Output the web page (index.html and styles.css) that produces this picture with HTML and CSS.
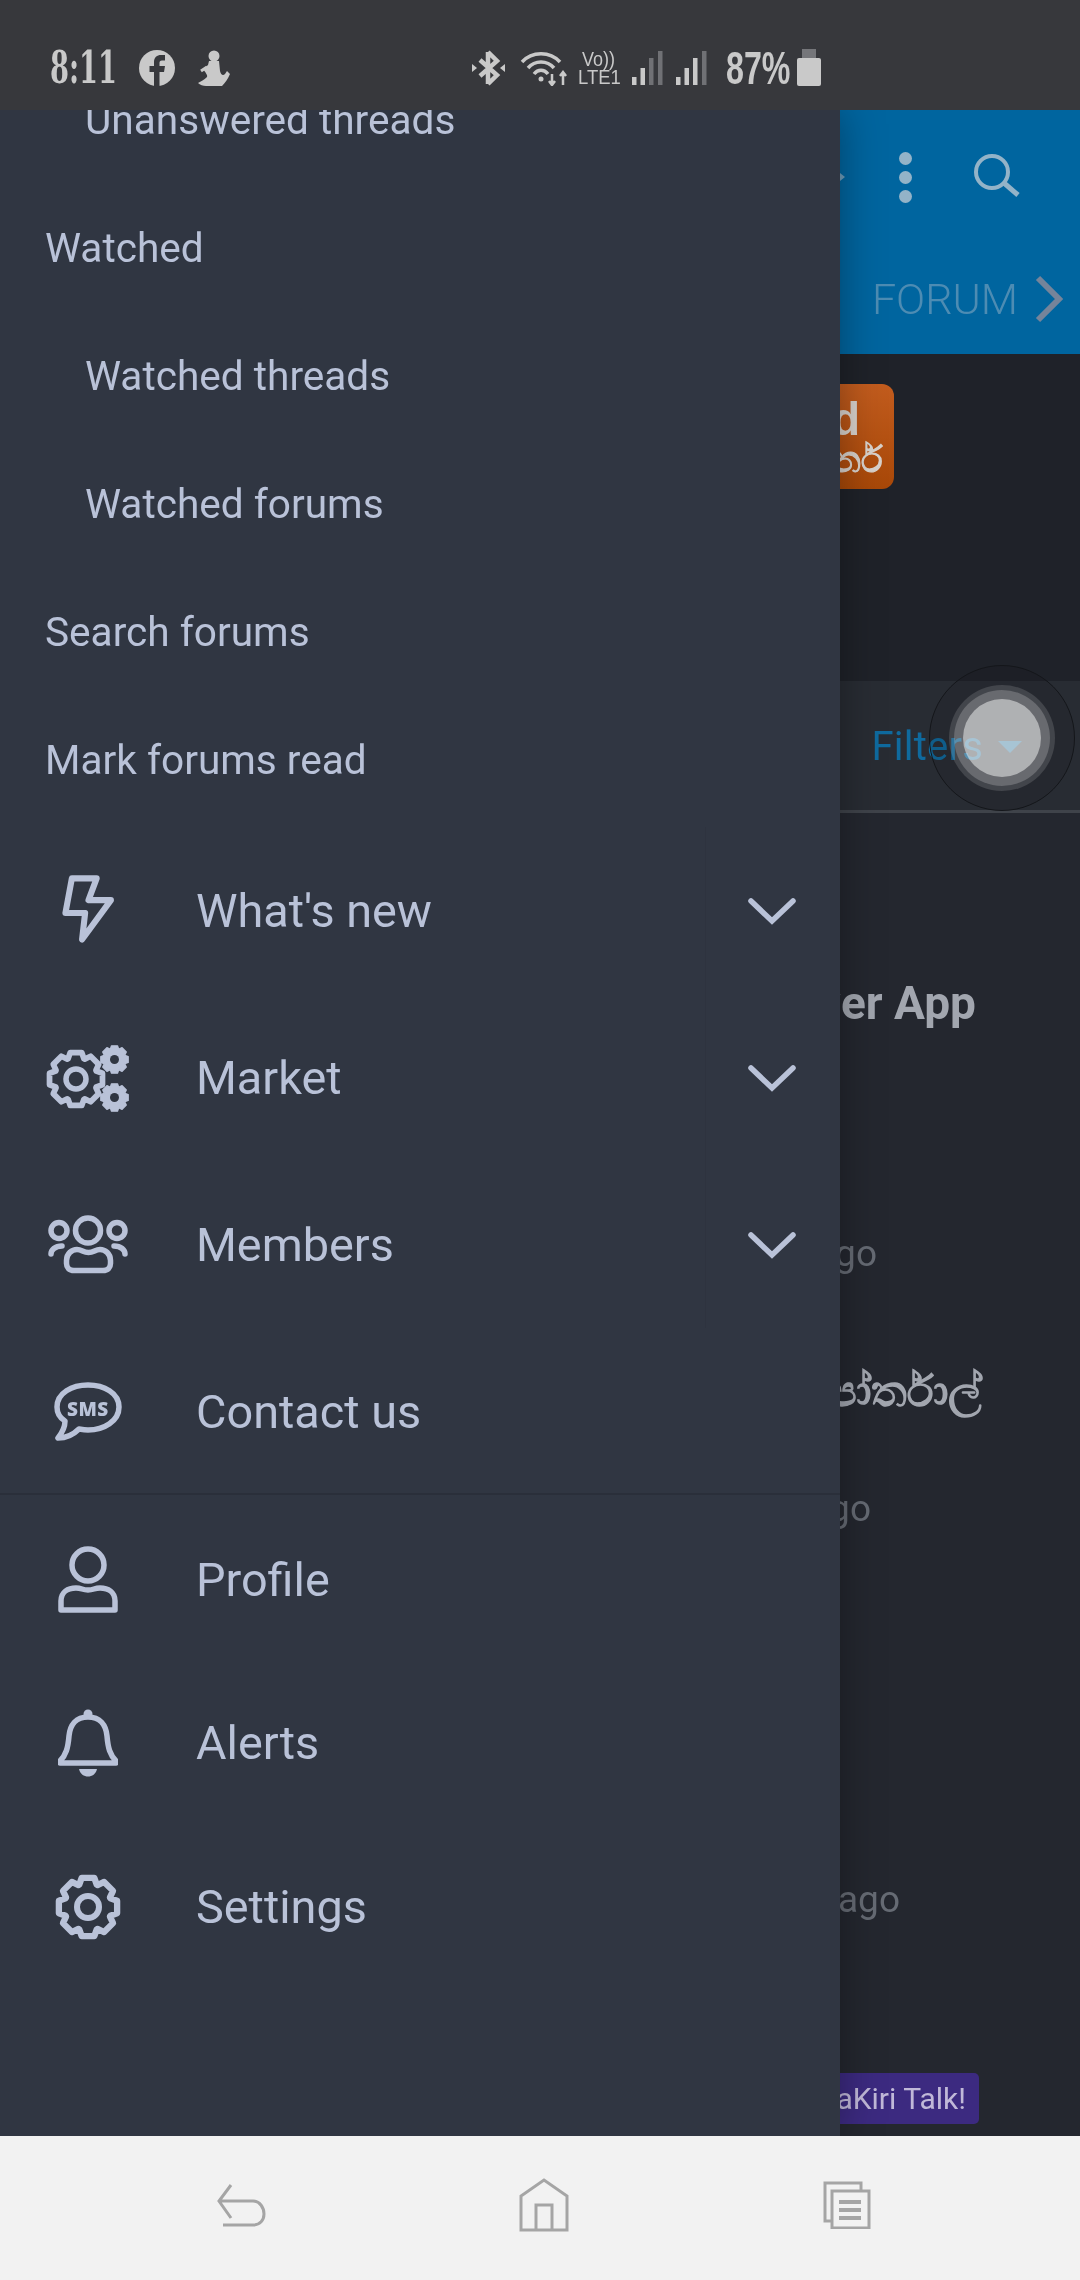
FILE: index.html
```html
<!DOCTYPE html>
<html>
<head>
    <link rel="stylesheet" href="styles.css">
</head>
<body>
    <svg class="defs" width="0" height="0">
        <symbol id="gear" viewBox="-34 -34 68 68">
            <polygon points="-9,-23 -6.5,-30 6.5,-30 9,-23 9.9,-22.6 16.6,-25.8 25.8,-16.6 22.6,-9.9 23,-9 30,-6.5 30,6.5 23,9 22.6,9.9 25.8,16.6 16.6,25.8 9.9,22.6 9,23 6.5,30 -6.5,30 -9,23 -9.9,22.6 -16.6,25.8 -25.8,16.6 -22.6,9.9 -23,9 -30,6.5 -30,-6.5 -23,-9 -22.6,-9.9 -25.8,-16.6 -16.6,-25.8 -9.9,-22.6"/>
        </symbol>
    </svg>

    <div class="screen">
        <div class="status-bar">
            <div class="status-left">
                <span class="clock"><span class="squeeze">8:11</span></span>
                <svg class="st-icon" width="36" height="36" viewBox="0 0 36 36">
                    <circle cx="18" cy="18" r="18" fill="#c9c9c9"/>
                    <path d="M15 36 V22 H10.5 V16 H15 V12 C15 7.5 18 5 22 5 H26 V10.5 H23 C21 10.5 20.5 11.5 20.5 13 V16 H26 L25 22 H20.5 V36 Z" fill="#37383c"/>
                </svg>
                <svg class="st-icon" width="32" height="36" viewBox="0 0 32 36">
                    <circle cx="16" cy="6" r="5.5" fill="#c9c9c9"/>
                    <path d="M11 11 H21 L22 21 C23 25 25 26 27 24 L29 21 L32 24 C30 29 27 33 24 36 H8 C5 36 2 35 0 33 C3 31 6 30 9 27 C10 25 7 22 5 19 L10 15 Z" fill="#c9c9c9"/>
                    <path d="M9 17 L3 21" stroke="#c9c9c9" stroke-width="3"/>
                </svg>
            </div>
            <div class="status-right">
                <svg class="st-icon" width="33" height="38" viewBox="0 0 33 38">
                    <path d="M16 3 L25 12 L8 27 M16 35 L25 26 L8 11 M16 3 V35" fill="none" stroke="#c9c9c9" stroke-width="4.5"/>
                    <path d="M0 15 L5 19 L0 23 Z M33 15 L28 19 L33 23 Z" fill="#c9c9c9"/>
                </svg>
                <svg class="st-icon wifi" width="50" height="36" viewBox="0 0 50 36">
                    <g fill="none" stroke="#c9c9c9" stroke-width="3.5">
                        <path d="M2 12 C12 1 30 1 40 12"/>
                        <path d="M8 18 C15 10 27 10 34 18"/>
                        <path d="M14 24 C18 19 24 19 28 24"/>
                    </g>
                    <circle cx="21" cy="29" r="2.5" fill="#c9c9c9"/>
                    <path d="M32 24 V35 M29 31 L32 35 L35 31 M43 35 V22 M40 26 L43 22 L46 26" fill="none" stroke="#c9c9c9" stroke-width="2.5"/>
                </svg>
                <div class="volte">
                    <span class="vo"><span class="squeeze">Vo))</span></span>
                    <span class="lte"><span class="squeeze">LTE1</span></span>
                </div>
                <svg class="st-icon signal" width="31" height="36" viewBox="0 0 31 36">
                    <rect x="0" y="27" width="4.5" height="8" fill="#c9c9c9"/>
                    <rect x="8.5" y="18" width="4.5" height="17" fill="#c9c9c9"/>
                    <rect x="17" y="8" width="4.5" height="27" fill="#707175"/>
                    <rect x="26" y="1" width="4.5" height="34" fill="#707175"/>
                </svg>
                <svg class="st-icon signal2" width="31" height="36" viewBox="0 0 31 36">
                    <rect x="0" y="27" width="4.5" height="8" fill="#c9c9c9"/>
                    <rect x="8.5" y="18" width="4.5" height="17" fill="#c9c9c9"/>
                    <rect x="17" y="8" width="4.5" height="27" fill="#c9c9c9"/>
                    <rect x="26" y="1" width="4.5" height="34" fill="#707175"/>
                </svg>
                <span class="percent"><span class="squeeze">87%</span></span>
                <div class="battery"></div>
            </div>
        </div>

        <div class="content">
            <div class="page">
                <div class="topbar">
                    <div class="actions">
                        <span class="caret-small"></span>
                        <div class="dots"><i></i><i></i><i></i></div>
                        <svg class="search" width="46" height="46" viewBox="0 0 46 46">
                            <circle cx="18" cy="18" r="16" fill="none" stroke="#93b3c8" stroke-width="4"/>
                            <path d="M30 29 L44 41" stroke="#93b3c8" stroke-width="5"/>
                        </svg>
                    </div>
                    <div class="tabs">
                        <span class="tab">FORUM</span>
                        <svg class="tab-next" width="28" height="48" viewBox="0 0 28 48">
                            <path d="M3 3 L24 24 L3 45" fill="none" stroke="#75849a" stroke-width="6"/>
                        </svg>
                    </div>
                </div>
                <div class="band">
                    <div class="logo">
                        <span class="logo-top">d</span>
                        <span class="logo-sub">ර්න</span>
                    </div>
                </div>
                <div class="filter-bar">
                    <span class="filters">Filters</span>
                    <span class="filter-caret"></span>
                </div>
                <div class="thread-list">
                    <div class="title t1">Newer App</div>
                    <div class="meta m1">A moment ago</div>
                    <div class="title t2">පෝර්තාල්</div>
                    <div class="meta m2">A moment ago</div>
                    <div class="meta m3">A moment ago</div>
                    <div class="badge"><span>LankaKiri Talk!</span></div>
                </div>
            </div>

            <div class="float-btn"><div class="float-mid"><div class="float-core"></div></div></div>

            <div class="drawer">
                <div class="drawer-inner">
                    <a class="link sub">Unanswered threads</a>
                    <a class="link">Watched</a>
                    <a class="link sub">Watched threads</a>
                    <a class="link sub">Watched forums</a>
                    <a class="link">Search forums</a>
                    <a class="link">Mark forums read</a>

                    <div class="row main first">
                        <div class="row-icon">
                            <svg width="56" height="74" viewBox="180 105 165 218">
                                <path class="line thick" d="M215 118 H288 L264 182 H330 L245 298 L254 220 H196 Z"/>
                            </svg>
                        </div>
                        <span class="row-label">What's new</span>
                        <div class="toggle"><svg class="chev" width="48" height="28" viewBox="0 0 48 28"><path d="M3 4 L24 24 L45 4"/></svg></div>
                    </div>
                    <div class="row main">
                        <div class="row-icon">
                            <svg width="84" height="68" viewBox="0 0 84 68">
                                <use href="#gear" x="0" y="5" width="60" height="60" class="line-gear"/>
                                <circle cx="30" cy="35" r="10" fill="none" stroke="#b9c2d8" stroke-width="5.5"/>
                                <use href="#gear" x="53" y="0" width="31" height="31" class="fill-gear"/>
                                <circle cx="68.5" cy="15.5" r="4.5" fill="#303642"/>
                                <use href="#gear" x="53" y="38" width="31" height="31" class="fill-gear"/>
                                <circle cx="68.5" cy="53.5" r="4.5" fill="#303642"/>
                            </svg>
                        </div>
                        <span class="row-label">Market</span>
                        <div class="toggle"><svg class="chev" width="48" height="28" viewBox="0 0 48 28"><path d="M3 4 L24 24 L45 4"/></svg></div>
                    </div>
                    <div class="row main">
                        <div class="row-icon">
                            <svg width="84" height="60" viewBox="0 0 84 60">
                                <g class="line">
                                    <circle cx="42" cy="15.5" r="12.5"/>
                                    <circle cx="13" cy="15.5" r="8"/>
                                    <circle cx="71" cy="15.5" r="8"/>
                                    <path class="round" d="M5 39 C5 35 9 31 16 31"/>
                                    <path class="round" d="M79 39 C79 35 75 31 68 31"/>
                                    <path d="M28 55.5 C23 55.5 20.5 52.5 20.5 48.5 V45.5 C20.5 38.5 26 34.5 31 34.5 C36 34.5 37 37.5 42.5 37.5 C48 37.5 49 34.5 54 34.5 C59 34.5 64.5 38.5 64.5 45.5 V48.5 C64.5 52.5 62 55.5 57 55.5 Z"/>
                                </g>
                            </svg>
                        </div>
                        <span class="row-label">Members</span>
                        <div class="toggle"><svg class="chev" width="48" height="28" viewBox="0 0 48 28"><path d="M3 4 L24 24 L45 4"/></svg></div>
                    </div>
                    <div class="row main">
                        <div class="row-icon sms-icon">
                            <svg width="68" height="60" viewBox="0 0 68 60">
                                <path class="line" d="M34 3 C18 3 3 11 3 25 C3 31 6 36 11 39 C11 45 8 51 4 56 C12 56 20 52 25 47 C28 47.5 31 48 34 48 C50 48 65 39 65 25 C65 11 50 3 34 3 Z"/>
                            </svg>
                            <span class="sms">SMS</span>
                        </div>
                        <span class="row-label">Contact us</span>
                    </div>

                    <div class="footer-rows">
                        <div class="row foot">
                            <div class="row-icon">
                                <svg width="60" height="68" viewBox="0 0 60 68">
                                    <g class="line">
                                        <circle cx="30" cy="19" r="16"/>
                                        <path d="M3 64 V55 C3 46 10 42 18 42 C24 42 24 44 30 44 C36 44 36 42 42 42 C50 42 57 46 57 55 V64 Z"/>
                                    </g>
                                </svg>
                            </div>
                            <span class="row-label">Profile</span>
                        </div>
                        <div class="row foot">
                            <div class="row-icon">
                                <svg width="60" height="68" viewBox="0 0 60 68">
                                    <path class="line" d="M30 8 C18 8 12 16 11 27 C10 39 8 46 2 52 V54 H58 V52 C52 46 50 39 49 27 C48 16 42 8 30 8 Z"/>
                                    <circle cx="30" cy="5" r="4.5" fill="#b9c2d8"/>
                                    <path d="M21 60 H39 C37 70 23 70 21 60 Z" fill="#b9c2d8"/>
                                </svg>
                            </div>
                            <span class="row-label">Alerts</span>
                        </div>
                        <div class="row foot">
                            <div class="row-icon">
                                <svg width="66" height="66" viewBox="0 0 66 66">
                                    <use href="#gear" x="0" y="0" width="66" height="66" class="line-gear"/>
                                    <circle cx="33" cy="33" r="11" fill="none" stroke="#b9c2d8" stroke-width="6"/>
                                </svg>
                            </div>
                            <span class="row-label">Settings</span>
                        </div>
                    </div>
                </div>
            </div>
        </div>

        <div class="nav-bar">
            <svg width="50" height="44" viewBox="0 0 50 44">
                <path d="M14 2 L2 18 L14 35 M2 18 H36 C43 18 47 25 47 31 C47 37 43 42 36 42 H6" fill="none" stroke="#a5a5a5" stroke-width="3"/>
            </svg>
            <svg class="nav-home" width="50" height="54" viewBox="0 0 50 54">
                <path d="M2 52 V18 L25 2 L48 18 V52 Z M17 52 V27 H33 V52" fill="none" stroke="#a5a5a5" stroke-width="3"/>
            </svg>
            <svg width="48" height="48" viewBox="0 0 48 48">
                <path d="M8 40 H2 V2 H38 V10" fill="none" stroke="#a5a5a5" stroke-width="3"/>
                <rect x="9" y="10" width="37" height="37" fill="none" stroke="#a5a5a5" stroke-width="3"/>
                <path d="M16 21 H38 M16 29 H38 M16 37 H38" stroke="#a5a5a5" stroke-width="4"/>
            </svg>
        </div>
    </div>
</body>
</html>
```

FILE: styles.css
```css
:root {
    --drawer-bg: #303642;
    --drawer-text: #b9c2d8;
    --status-text: #c9c9c9;
}
* {
    box-sizing: border-box;
}
html, body {
    margin: 0;
    padding: 0;
}
body {
    width: 1080px;
    height: 2280px;
    overflow: hidden;
    font-family: Roboto, "Noto Sans", sans-serif;
    background: #24272f;
}
.defs {
    position: absolute;
}
.screen {
    display: flex;
    flex-direction: column;
    height: 2280px;
}

/* status bar */
.status-bar {
    display: flex;
    align-items: center;
    height: 110px;
    padding: 26px 0 0 50px;
    background: #37383c;
    flex-shrink: 0;
}
.status-left {
    display: flex;
    align-items: center;
    width: 422px;
}
.status-right {
    display: flex;
    align-items: center;
}
.st-icon {
    display: block;
}
.squeeze {
    display: inline-block;
    transform-origin: left center;
    white-space: nowrap;
}
.clock {
    display: block;
    width: 89px;
    height: 40px;
    color: var(--status-text);
    font: bold 44px/40px "DejaVu Serif", serif;
}
.clock .squeeze {
    transform: scaleX(0.62);
}
.status-left .st-icon + .st-icon {
    margin-left: 23px;
}
.status-right .wifi {
    margin-left: 15px;
}
.volte {
    display: flex;
    flex-direction: column;
    width: 44px;
    margin-left: 8px;
    color: var(--status-text);
    font-family: "Liberation Sans", sans-serif;
}
.vo {
    height: 18px;
    padding-left: 4px;
    font-size: 20px;
    line-height: 18px;
}
.vo .squeeze {
    transform: scaleX(0.9);
}
.lte {
    height: 18px;
    font-size: 21px;
    line-height: 18px;
}
.lte .squeeze {
    transform: scaleX(0.88);
}
.signal {
    margin-left: 10px;
}
.signal2 {
    margin-left: 13px;
}
.percent {
    display: block;
    width: 71px;
    height: 40px;
    margin-left: 19px;
    color: var(--status-text);
    font: bold 46px/40px "Liberation Sans", sans-serif;
}
.percent .squeeze {
    transform: scaleX(0.7);
}
.battery {
    position: relative;
    width: 24px;
    height: 28px;
    margin-top: 8px;
    background: #c9c9c9;
    border-radius: 2px;
}
.battery::before {
    content: "";
    position: absolute;
    top: -9px;
    left: 5px;
    width: 14px;
    height: 9px;
    background: #75767a;
}

/* page behind the drawer */
.content {
    position: relative;
    flex: 1;
    overflow: hidden;
}
.topbar {
    height: 244px;
    background: #00659f;
}
.actions {
    display: flex;
    align-items: center;
    justify-content: flex-end;
    height: 134px;
    padding: 0 60px 0 0;
}
.caret-small {
    width: 0;
    height: 0;
    margin-right: 54px;
    border-top: 4px solid transparent;
    border-bottom: 4px solid transparent;
    border-left: 5px solid #6d9cb9;
}
.dots {
    display: flex;
    flex-direction: column;
    gap: 6px;
    margin-right: 62px;
}
.dots i {
    display: block;
    width: 13px;
    height: 13px;
    border-radius: 50%;
    background: #93b3c8;
}
.tabs {
    display: flex;
    align-items: center;
    justify-content: flex-end;
    height: 110px;
    padding: 0 17px 0 0;
}
.tab {
    margin-right: 17px;
    color: #4d8cb3;
    font-size: 43px;
    font-weight: 300;
}
.band {
    display: flex;
    justify-content: flex-end;
    height: 327px;
    padding: 30px 186px 0 0;
    background: #1f2229;
}
.logo {
    display: flex;
    flex-direction: column;
    align-items: flex-end;
    width: 120px;
    height: 105px;
    padding: 12px 11px 0 0;
    border-radius: 12px;
    background: linear-gradient(180deg, #c25c1e, #a84808);
    color: #d8d2cc;
    font-family: "Liberation Sans", sans-serif;
}
.logo-top {
    margin-right: 23px;
    font-size: 46px;
    font-weight: bold;
    line-height: 46px;
}
.logo-sub {
    font-size: 36px;
    line-height: 36px;
    -webkit-text-stroke: 1.2px #d8d2cc;
}
.filter-bar {
    display: flex;
    align-items: center;
    justify-content: flex-end;
    height: 132px;
    padding: 2px 58px 0 0;
    background: #282c33;
    border-bottom: 3px solid #3f434a;
}
.filters {
    color: #0f6a9e;
    font-size: 40px;
    letter-spacing: 0.2px;
}
.filter-caret {
    width: 0;
    height: 0;
    margin-left: 15px;
    border-left: 12px solid transparent;
    border-right: 12px solid transparent;
    border-top: 12px solid #0f6a9e;
}
.thread-list {
    display: flex;
    flex-direction: column;
    align-items: flex-end;
    padding-right: 104px;
}
.title {
    height: 50px;
    color: #a2a6af;
    font-size: 46px;
    font-weight: bold;
    line-height: 50px;
    white-space: nowrap;
}
.meta {
    height: 50px;
    color: #666b74;
    font-size: 37px;
    line-height: 50px;
    white-space: nowrap;
}
.t1 { margin-top: 165px; }
.m1 { margin-top: 201px; margin-right: 99px; }
.t2 {
    margin-top: 87px;
    margin-right: -6px;
    font-size: 44px;
    font-weight: normal;
    -webkit-text-stroke: 1.6px #a2a6af;
}
.m2 { margin-top: 68px; margin-right: 105px; }
.m3 { margin-top: 341px; margin-right: 76px; }
.badge {
    height: 51px;
    margin-top: 148px;
    margin-right: -3px;
    padding: 0 13px;
    border-radius: 5px;
    background: #3c2a80;
    color: #c0b8d8;
    font-size: 30px;
    line-height: 51px;
    white-space: nowrap;
}

/* floating button, over the page */
.float-btn {
    position: absolute;
    left: 929px;
    top: 555px;
    display: flex;
    align-items: center;
    justify-content: center;
    width: 146px;
    height: 146px;
    border-radius: 50%;
    border: 1px solid #14161a;
    background: rgba(20, 22, 26, 0.15);
}
.float-mid {
    display: flex;
    align-items: center;
    justify-content: center;
    width: 106px;
    height: 106px;
    border-radius: 50%;
    background: #222222;
    mix-blend-mode: screen;
}
.float-core {
    width: 78px;
    height: 78px;
    border-radius: 50%;
    background: #a2a2a2;
    box-shadow: 0 0 0 9px #4e4e4e;
}

/* drawer */
.drawer {
    position: absolute;
    top: 0;
    left: 0;
    bottom: 0;
    width: 840px;
    overflow: hidden;
    background: var(--drawer-bg);
    box-shadow: 0 0 40px rgba(0, 0, 0, 0.35);
}
.drawer-inner {
    margin-top: -54px;
    color: var(--drawer-text);
}
.link {
    display: block;
    height: 128px;
    padding-left: 45px;
    font-size: 40.6px;
    line-height: 128px;
}
.link.sub {
    padding-left: 85px;
}
.row {
    display: flex;
    align-items: center;
}
.row.main {
    height: 167px;
}
.row.first {
    margin-top: 3px;
}
.row.foot {
    height: 163.5px;
}
.row-icon {
    position: relative;
    display: flex;
    align-items: center;
    justify-content: center;
    width: 176px;
    margin-right: 20px;
}
.row-label {
    flex: 1;
    font-size: 46.8px;
}
.toggle {
    display: flex;
    align-items: center;
    justify-content: center;
    width: 135px;
    height: 100%;
    padding-right: 3px;
    border-left: 1px solid #2e333f;
}
.line {
    fill: none;
    stroke: var(--drawer-text);
    stroke-width: 5.5;
    stroke-linejoin: round;
}
.line.thick {
    stroke-width: 18;
}
.line .round {
    stroke-linecap: round;
}
.line-gear {
    fill: none;
    stroke: var(--drawer-text);
    stroke-width: 6.5;
    stroke-linejoin: round;
}
.fill-gear {
    fill: var(--drawer-text);
    stroke: var(--drawer-text);
    stroke-width: 3;
    stroke-linejoin: round;
}
.chev path {
    fill: none;
    stroke: var(--drawer-text);
    stroke-width: 5.5;
    stroke-linecap: round;
}
.sms {
    position: absolute;
    top: 14px;
    left: 67px;
    color: var(--drawer-text);
    font: 800 19px "Open Sans", sans-serif;
    letter-spacing: 0.5px;
}
.footer-rows {
    margin-top: -2px;
    padding-top: 3px;
    border-top: 2px solid #2a2f3a;
}

/* bottom nav */
.nav-bar {
    display: flex;
    align-items: center;
    height: 144px;
    flex-shrink: 0;
    padding: 0 209px 6px 217px;
    justify-content: space-between;
    background: #f2f2f2;
}
.nav-home {
    margin-right: 3px;
}
```
